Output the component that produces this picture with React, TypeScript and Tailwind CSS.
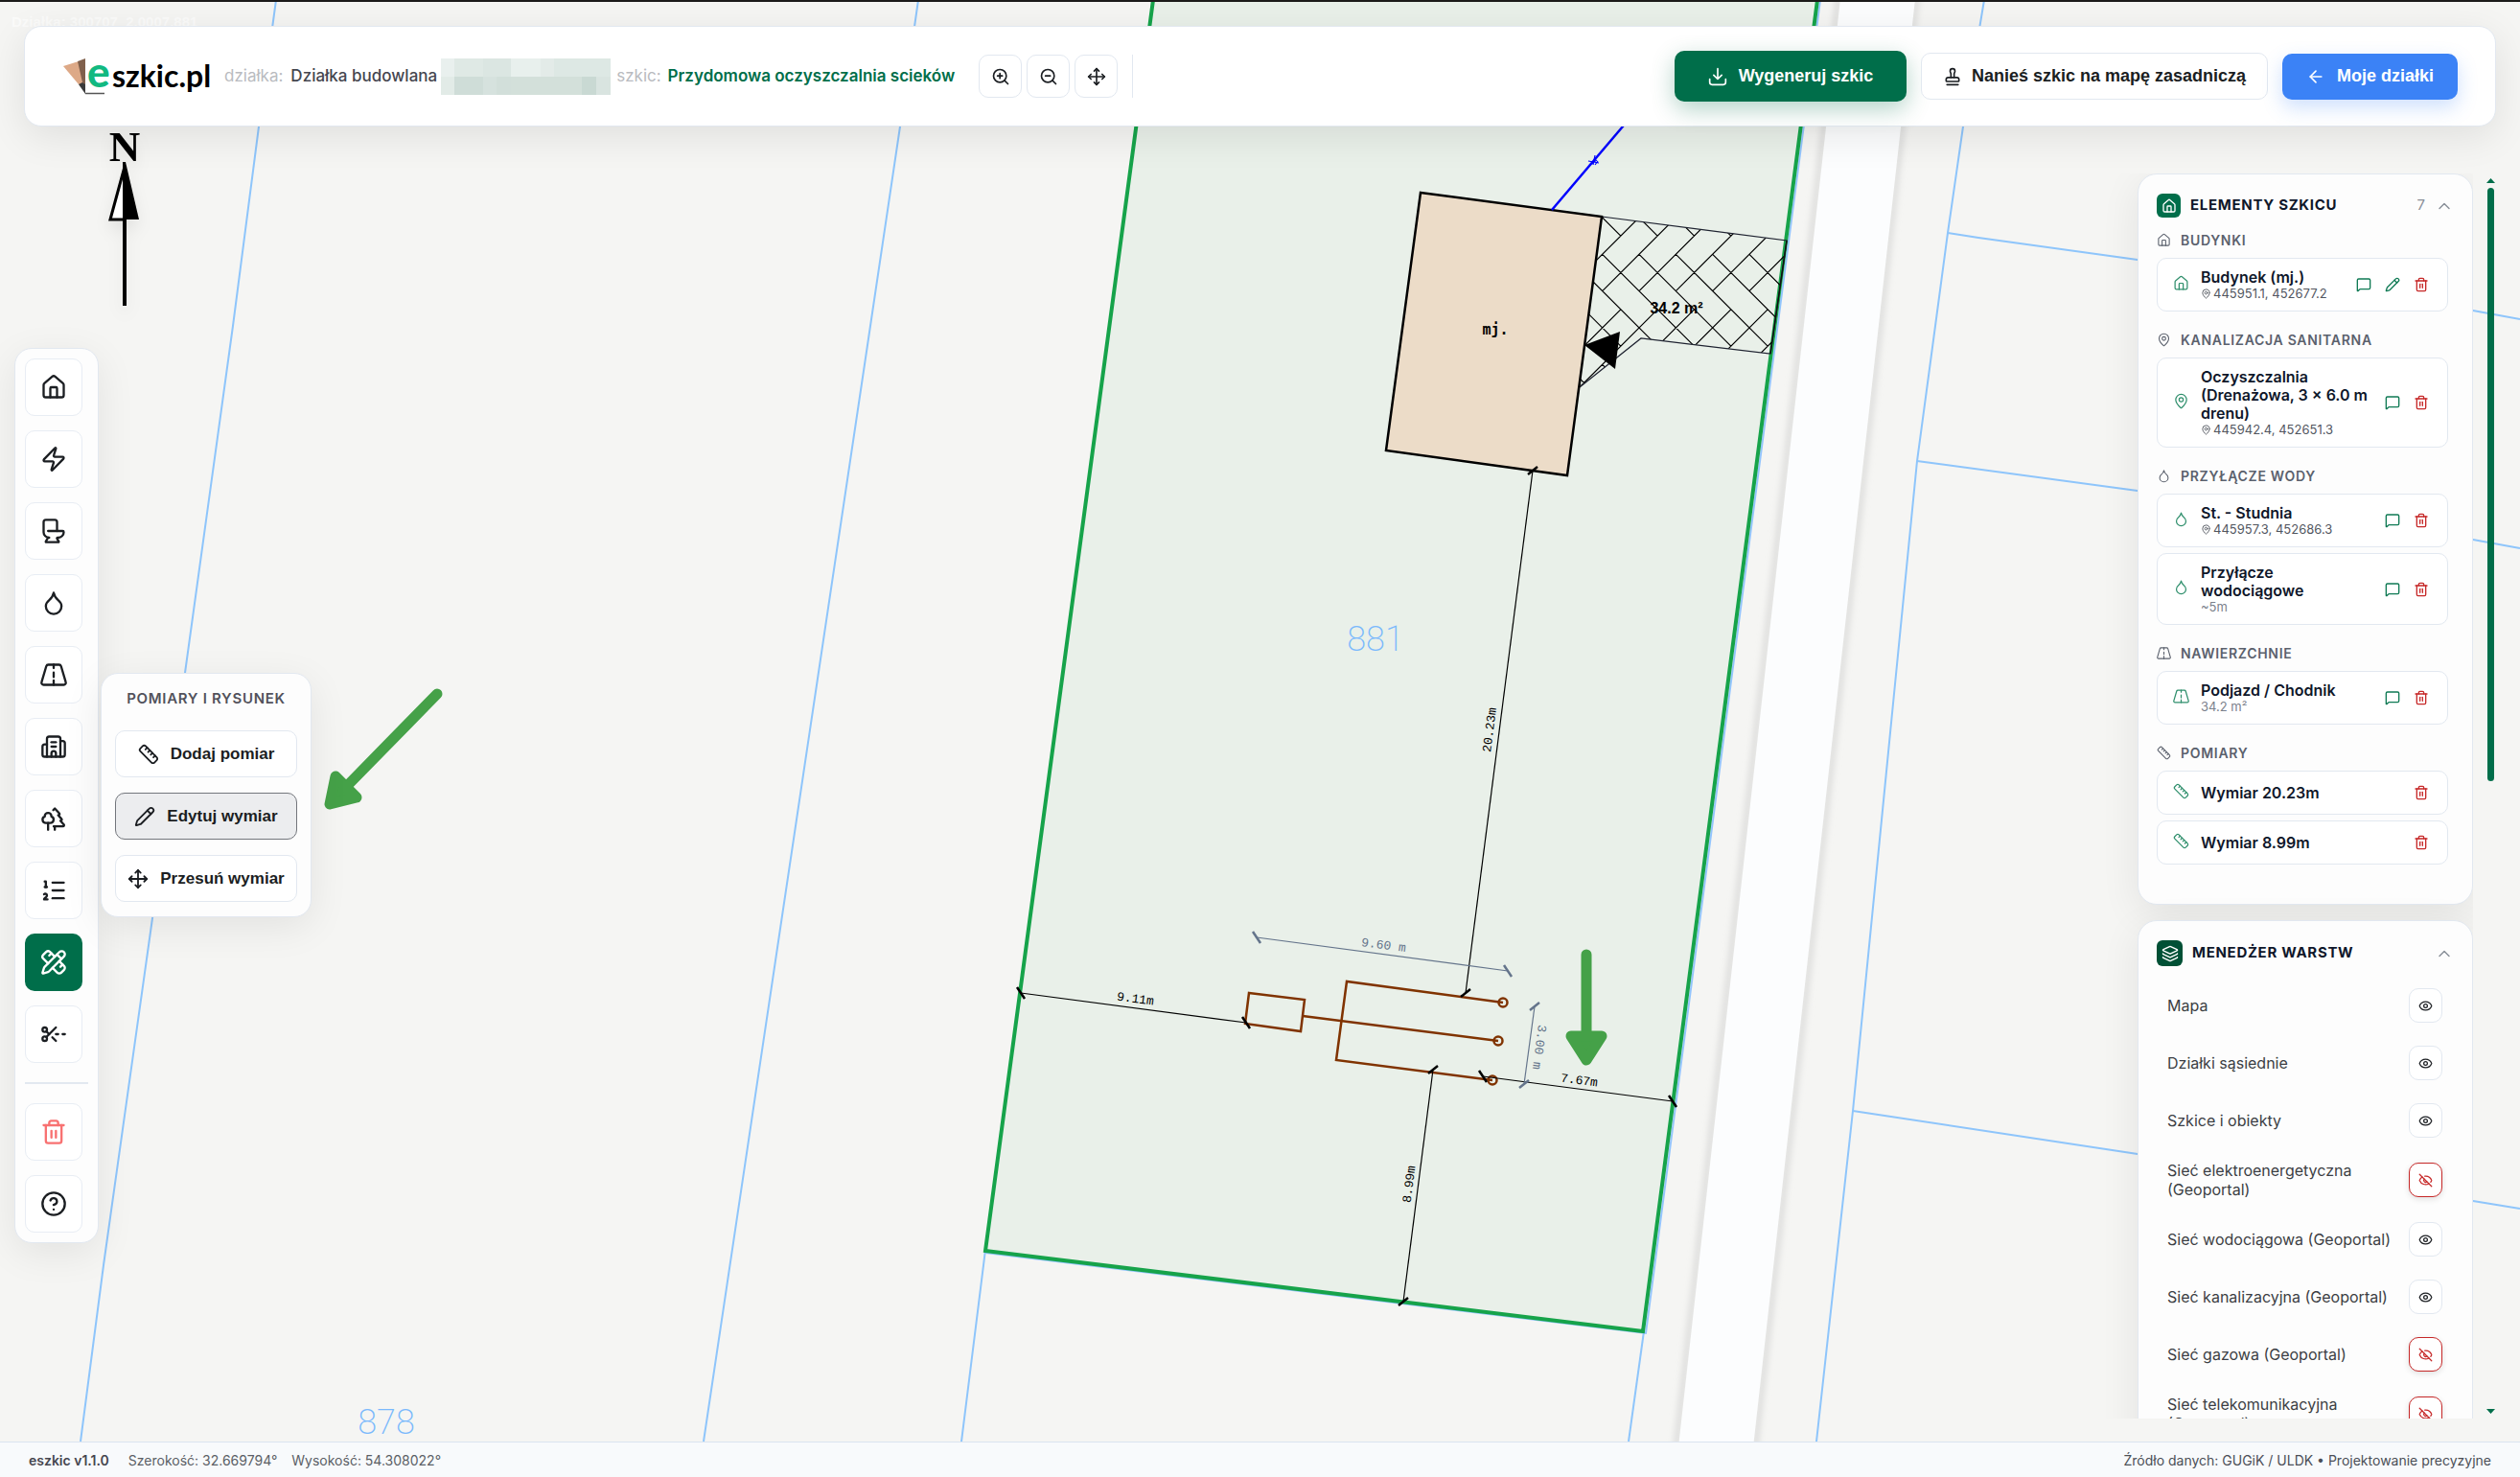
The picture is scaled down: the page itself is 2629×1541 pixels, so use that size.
import React from "react";
import {
  ArrowLeft,
  Building2,
  ChevronUp,
  CircleHelp,
  Droplet,
  Eye,
  EyeOff,
  House,
  Layers,
  ListOrdered,
  MapPin,
  MessageSquare,
  Move,
  Pencil,
  PencilRuler,
  Ruler,
  ScissorsLineDashed,
  Stamp,
  Toilet,
  Trash2,
  Trees,
  Zap,
  ZoomIn,
  ZoomOut,
} from "lucide-react";

type IconProps = { size?: number; strokeWidth?: number; className?: string };
type IconType = React.ComponentType<IconProps>;

function stroke(size: number, strokeWidth: number, className?: string) {
  return {
    width: size,
    height: size,
    viewBox: "0 0 24 24",
    fill: "none",
    stroke: "currentColor",
    strokeWidth,
    strokeLinecap: "round" as const,
    strokeLinejoin: "round" as const,
    className,
    "aria-hidden": true,
  };
}

function RoadIcon({ size = 24, strokeWidth = 2, className }: IconProps) {
  return (
    <svg {...stroke(size, strokeWidth, className)}>
      <path d="M12 17v4M12 10v4M12 3v3" />
      <path d="M7.2 3h9.6a1.9 1.9 0 0 1 1.8 1.3l4.2 14.2a1.9 1.9 0 0 1-1.9 2.5H3.1a1.9 1.9 0 0 1-1.9-2.5L5.4 4.3A1.9 1.9 0 0 1 7.2 3z" />
    </svg>
  );
}

function DownloadTray({ size = 24, strokeWidth = 2, className }: IconProps) {
  return (
    <svg {...stroke(size, strokeWidth, className)}>
      <path d="M12 2v13M7 10l5 5 5-5" />
      <path d="M2 15v4a3 3 0 0 0 3 3h14a3 3 0 0 0 3-3v-4" />
    </svg>
  );
}

/* ---------- map ---------- */

function Tick({ x, y, kind }: { x: number; y: number; kind: "h" | "v" }) {
  const dx = kind === "h" ? 4 : 5;
  const dy = kind === "h" ? 6 : -4;
  return <line x1={x - dx} y1={y - dy} x2={x + dx} y2={y + dy} strokeWidth="2.5" />;
}

type Dim = {
  a: [number, number];
  b: [number, number];
  t: [number, number];
  rot: number;
  kind: "h" | "v";
  color: string;
  label: string;
};

const dims: Dim[] = [
  { a: [1065, 1036], b: [1300, 1067], t: [1184, 1046], rot: 7.5, kind: "h", color: "#000", label: "9.11m" },
  { a: [1599, 491], b: [1529, 1036], t: [1558, 762], rot: -82.5, kind: "v", color: "#000", label: "20.23m" },
  { a: [1495, 1116], b: [1464, 1358], t: [1474, 1236], rot: -82.5, kind: "v", color: "#000", label: "8.99m" },
  { a: [1547, 1123], b: [1745, 1149], t: [1647, 1131], rot: 7.5, kind: "h", color: "#000", label: "7.67m" },
  { a: [1311, 978], b: [1573, 1013], t: [1443, 990], rot: 7.5, kind: "h", color: "#64748b", label: "9.60 m" },
  { a: [1601, 1050], b: [1590, 1131], t: [1602, 1092], rot: 97.5, kind: "v", color: "#64748b", label: "3.00 m" },
];

/* Herringbone paving: two families of 45° joints on a rectangular grid. */
const hatch: string[] = [];
for (let j = -2; j <= 2; j++) {
  for (let i = -5; i <= 6; i++) {
    const x = 1671.7 + i * 38.33;
    const y = 265.3 + j * 115;
    hatch.push(`M${x} ${y}l95.8 95.8`);
    hatch.push(`M${x} ${y + 38.3}l95.8 -95.8`);
  }
}

const parcels = [
  "M288 0L270 132L243 340L193 702L159 958L108 1320L84 1504",
  "M958 0L939 132L908 340L734 1504",
  "M1028 1304L1003 1504",
  "M1715 1389L1699 1504",
  "M2070 0L2048 132L2032 243L2019 340L2000 481L1933 1159L1895 1504",
  "M2032 243L2064 248L2230 271L2580 324L2629 333",
  "M2000 481L2230 512L2580 563L2629 572",
  "M1933 1159L2230 1204L2580 1253L2629 1261",
];

function MapCanvas() {
  return (
    <svg
      className="absolute inset-0 h-full w-full"
      viewBox="0 0 2629 1504"
      preserveAspectRatio="xMinYMin slice"
      role="img"
      aria-label="Mapa działki"
    >
      <defs>
        <clipPath id="driveway">
          <path d="M1671 226L1864 251L1847 369L1712 353L1648 404z" />
        </clipPath>
        <filter id="soft" x="-20%" y="-5%" width="140%" height="110%">
          <feGaussianBlur stdDeviation="3" />
        </filter>
      </defs>
      <rect width="2629" height="1504" fill="#f5f5f3" />
      <path d="M1919 -10L1749 1510M2000 -10L1831 1510" stroke="#dededd" strokeWidth="7" filter="url(#soft)" />
      <path d="M1921 -10L1999 -10L1829 1510L1751 1510z" fill="#fcfdfe" />
      <path d="M1203 0L1896 0L1714 1389L1028 1305z" fill="#e9f0e9" />
      <g fill="none" stroke="#8ec5fb" strokeWidth="2">
        {parcels.map((d) => (
          <path key={d} d={d} />
        ))}
      </g>
      <path d="M1899 0L1717 1391L1028 1307" fill="none" stroke="#93c5fd" strokeWidth="2" />
      <path d="M1203 0L1028 1305L1714 1389L1896 0" fill="none" stroke="#16a34a" strokeWidth="4" />

      <g fill="#7ab9fc" fontFamily="Roboto, sans-serif" fontWeight="200" fontSize="36" textAnchor="middle">
        <text x="1435" y="679">881</text>
        <text x="403" y="1496">878</text>
      </g>

      <path d={hatch.join("")} stroke="#000" strokeWidth="1.2" clipPath="url(#driveway)" />
      <path d="M1671 226L1864 251L1847 369L1712 353L1648 404" fill="none" stroke="#1e2230" strokeWidth="1.2" />
      <path d="M1864 251L1847 369" stroke="#111" strokeWidth="1.5" />
      <path d="M1482 201L1671 226L1635 496L1446 470z" fill="#ecdcc8" stroke="#000" strokeWidth="2.5" />
      <path d="M1653 360L1690 346L1685 385z" />
      <path d="M1619 219L1704 119" stroke="#0000ff" strokeWidth="2.5" />
      <path d="M1657 168l11 2M1662 172l2-10M1658 172l8-5M1664 172l3-4" stroke="#0000ff" strokeWidth="1.2" />
      <text x="1560" y="349" fontFamily="'DejaVu Sans Mono', monospace" fontWeight="700" fontSize="15" textAnchor="middle">
        mj.
      </text>
      <text x="1749" y="327" fontFamily="'Liberation Sans', sans-serif" fontWeight="700" fontSize="16" textAnchor="middle">
        34.2 m²
      </text>

      <g fill="none" stroke="#803300" strokeWidth="2.5">
        <path d="M1303 1036L1361 1043L1357 1076L1299 1068z" />
        <path d="M1359 1060L1563 1086" />
        <path d="M1568 1046L1405 1024L1394 1106L1557 1127" />
        <circle cx="1568" cy="1046" r="4.5" />
        <circle cx="1563" cy="1086" r="4.5" />
        <circle cx="1557" cy="1127" r="4.5" />
      </g>

      {dims.map((d) => (
        <g key={d.label} stroke={d.color} strokeWidth="1.2">
          <line x1={d.a[0]} y1={d.a[1]} x2={d.b[0]} y2={d.b[1]} />
          <Tick x={d.a[0]} y={d.a[1]} kind={d.kind} />
          <Tick x={d.b[0]} y={d.b[1]} kind={d.kind} />
          <text
            transform={`translate(${d.t[0]} ${d.t[1]}) rotate(${d.rot})`}
            fill={d.color}
            stroke="none"
            fontFamily="'Liberation Mono', monospace"
            fontSize="13"
            textAnchor="middle"
          >
            {d.label}
          </text>
        </g>
      ))}

      <g stroke="#45a148" fill="#45a148" strokeWidth="11" strokeLinecap="round" strokeLinejoin="round">
        <path d="M456 724L362 820" />
        <path d="M344 839L350 810L372 832z" />
        <path d="M1655 996L1655 1082" />
        <path d="M1639 1081L1671 1081L1655 1106z" />
      </g>
    </svg>
  );
}

/* ---------- header ---------- */

function Logo() {
  return (
    <svg width="156" height="42" viewBox="65 59 156 42" className="overflow-visible" role="img" aria-label="eszkic.pl">
      <path d="M66 69L82 64L88 90L82 88z" fill="#dda987" />
      <path d="M81 64L89 61L89 89L86 86z" fill="#80604c" />
      <path d="M82 88L86 86L89 88L89 98z" fill="#3a3a3a" />
      <path d="M89 97.5H109" stroke="#555" strokeWidth="1.5" />
      <text x="91" y="91" fontFamily="Lato, sans-serif" fontWeight="900" fontSize="44" fill="#12b981">
        e
      </text>
      <text x="117" y="91" fontFamily="Lato, sans-serif" fontWeight="700" fontSize="32" fill="#000">
        szkic.pl
      </text>
    </svg>
  );
}

const mosaic = [
  ["w-[14px] bg-[#e9f0ee]", "w-[30px] bg-[#dfe9e5]", "w-[29px] bg-[#dbe6e2]", "w-[31px] bg-[#e8f0ed]", "w-[14px] bg-[#e3ebe8]", "w-[59px] bg-[#dde8e4]"],
  ["w-[14px] bg-[#e2ebe7]", "w-[30px] bg-[#cfddd8]", "w-[14px] bg-[#d6e2de]", "w-[15px] bg-[#d2dfda]", "w-[74px] bg-[#d3e0da]", "w-[15px] bg-[#c9d9d3]", "w-[15px] bg-[#d9e4e0]"],
];

function ViewButton({ icon: Icon, label }: { icon: IconType; label: string }) {
  return (
    <button aria-label={label} className="flex h-[45px] w-[45px] items-center justify-center rounded-[10px] border border-[#e2e8f0] bg-white text-[#1b1e22]">
      <Icon size={20} strokeWidth={2} />
    </button>
  );
}

function Header() {
  return (
    <header className="relative mx-[25px] mt-[27px] flex shrink-0 items-center justify-between rounded-[18px] border border-[#e2e8f0] bg-white pt-[25px] pb-[25px] pr-[39px] pl-[39px] shadow-[0_10px_40px_rgba(0,0,0,0.09)]">
      <div className="flex items-center">
        <Logo />
        <div className="ml-[13px] flex items-center gap-2 text-[17px] whitespace-nowrap">
          <span className="text-[#b9bbc0]">działka:</span>
          <span className="font-medium text-[#45464f]">Działka budowlana</span>
        </div>
        <div className="ml-1 w-[177px]" aria-hidden>
          {mosaic.map((row, r) => (
            <div key={r} className="flex">
              {row.map((c) => (
                <span key={c} className={`${c} h-[19px]`} />
              ))}
            </div>
          ))}
        </div>
        <div className="ml-[6px] flex items-center gap-[7px] text-[17px] whitespace-nowrap">
          <span className="text-[#b9bbc0]">szkic:</span>
          <span className="font-semibold text-[#006e4a]">Przydomowa oczyszczalnia scieków</span>
        </div>
        <div className="ml-[25px] flex gap-[5px] border-r border-[#e2e8f0] pr-[15px]">
          <ViewButton icon={ZoomIn} label="Powiększ" />
          <ViewButton icon={ZoomOut} label="Pomniejsz" />
          <ViewButton icon={Move} label="Dopasuj widok" />
        </div>
      </div>
      <div className="flex items-center gap-[15px] font-['Liberation_Sans',sans-serif] text-[18px] font-bold whitespace-nowrap">
        <button className="flex h-[53px] w-[242px] items-center justify-center gap-3 rounded-[10px] bg-[#006e4a] text-white shadow-[0_8px_24px_rgba(0,110,74,0.3)]">
          <DownloadTray size={20} />
          Wygeneruj szkic
        </button>
        <button className="flex h-[49px] w-[362px] items-center justify-center gap-[10px] rounded-[10px] border border-[#e2e8f0] bg-white text-[#1b1e22]">
          <Stamp size={20} />
          Nanieś szkic na mapę zasadniczą
        </button>
        <button className="flex h-12 w-[183px] items-center justify-center gap-3 rounded-[10px] bg-[#3b82f6] text-white shadow-[0_8px_20px_rgba(59,130,246,0.25)]">
          <ArrowLeft size={20} />
          Moje działki
        </button>
      </div>
    </header>
  );
}

/* ---------- left side ---------- */

function NorthArrow() {
  return (
    <svg width="60" height="190" viewBox="100 134 60 190" className="overflow-visible drop-shadow-[0_8px_8px_rgba(0,0,0,0.08)]" role="img" aria-label="Północ">
      <text x="130" y="168" fontFamily="'Liberation Serif', serif" fontWeight="700" fontSize="45" textAnchor="middle">
        N
      </text>
      <path d="M130 174V229H115z" fill="#fff" stroke="#000" strokeWidth="3" />
      <path d="M128 169h3L145 229H129z" />
      <path d="M130 175V319" stroke="#000" strokeWidth="4" />
    </svg>
  );
}

const tools: { icon: IconType; label: string; active?: boolean }[] = [
  { icon: House, label: "Budynki" },
  { icon: Zap, label: "Energia" },
  { icon: Toilet, label: "Kanalizacja" },
  { icon: Droplet, label: "Woda" },
  { icon: RoadIcon, label: "Nawierzchnie" },
  { icon: Building2, label: "Zabudowa" },
  { icon: Trees, label: "Zieleń" },
  { icon: ListOrdered, label: "Numeracja" },
  { icon: PencilRuler, label: "Pomiary i rysunek", active: true },
  { icon: ScissorsLineDashed, label: "Przekrój" },
];

const toolBtn = "flex h-[60px] w-[60px] items-center justify-center rounded-[10px]";

function MeasureMenu() {
  const base =
    "flex h-[49px] w-full items-center justify-center gap-3 rounded-[10px] border font-['Liberation_Sans',sans-serif] text-[17px] font-bold text-[#1b1e22] whitespace-nowrap";
  return (
    <div className="absolute top-[338px] left-[89px] flex w-[220px] flex-col gap-4 rounded-[18px] border border-[#e2e8f0] bg-[#fdfdfd] p-[14px] pb-[15px] shadow-[0_10px_40px_rgba(0,0,0,0.08)]">
      <h2 className="mt-[3px] mb-2 text-center text-[15px] leading-[18px] font-semibold tracking-[0.7px] text-[#52525b]">POMIARY I RYSUNEK</h2>
      <button className={`${base} border-[#e2e8f0] bg-white`}>
        <Ruler size={22} />
        Dodaj pomiar
      </button>
      <button className={`${base} border-[#73767c] bg-[#ecedef]`}>
        <Pencil size={22} />
        Edytuj wymiar
      </button>
      <button className={`${base} border-[#e2e8f0] bg-white`}>
        <Move size={22} />
        Przesuń wymiar
      </button>
    </div>
  );
}

function Toolbar() {
  return (
    <nav className="relative ml-[15px] flex w-[88px] flex-col gap-[15px] rounded-[18px] border border-[#e2e8f0] bg-[#fdfdfd] p-[10px] shadow-[0_10px_40px_rgba(0,0,0,0.08)]">
      {tools.map(({ icon: Icon, label, active }) => (
        <button
          key={label}
          aria-label={label}
          className={active ? `${toolBtn} bg-[#006e4a] text-white` : `${toolBtn} border border-[#e8edf4] bg-white text-[#1b1e22]`}
        >
          <Icon size={28} />
        </button>
      ))}
      <hr className="my-[5px] border-t-2 border-[#e2e8f0]" />
      <button aria-label="Usuń" className={`${toolBtn} border border-[#e8edf4] bg-white text-[#f87171]`}>
        <Trash2 size={28} />
      </button>
      <button aria-label="Pomoc" className={`${toolBtn} border border-[#e8edf4] bg-white text-[#1b1e22]`}>
        <CircleHelp size={28} />
      </button>
      <MeasureMenu />
    </nav>
  );
}

/* ---------- right side ---------- */

type Item = { title: string; coords?: string; note?: string; actions: ("msg" | "edit" | "del")[] };
const groups: { name: string; icon: IconType; items: Item[] }[] = [
  { name: "BUDYNKI", icon: House, items: [{ title: "Budynek (mj.)", coords: "445951.1, 452677.2", actions: ["msg", "edit", "del"] }] },
  {
    name: "KANALIZACJA SANITARNA",
    icon: MapPin,
    items: [{ title: "Oczyszczalnia (Drenażowa, 3 × 6.0 m drenu)", coords: "445942.4, 452651.3", actions: ["msg", "del"] }],
  },
  {
    name: "PRZYŁĄCZE WODY",
    icon: Droplet,
    items: [
      { title: "St. - Studnia", coords: "445957.3, 452686.3", actions: ["msg", "del"] },
      { title: "Przyłącze wodociągowe", note: "~5m", actions: ["msg", "del"] },
    ],
  },
  { name: "NAWIERZCHNIE", icon: RoadIcon, items: [{ title: "Podjazd / Chodnik", note: "34.2 m²", actions: ["msg", "del"] }] },
  {
    name: "POMIARY",
    icon: Ruler,
    items: [
      { title: "Wymiar 20.23m", actions: ["del"] },
      { title: "Wymiar 8.99m", actions: ["del"] },
    ],
  },
];

const actionMap = {
  msg: { icon: MessageSquare as IconType, label: "Komentarz", cls: "text-[#0f7a54]" },
  edit: { icon: Pencil as IconType, label: "Edytuj", cls: "text-[#0f7a54]" },
  del: { icon: Trash2 as IconType, label: "Usuń", cls: "text-[#c62828]" },
};

function ItemCard({ item, icon: Icon }: { item: Item; icon: IconType }) {
  return (
    <li className="flex items-center rounded-[10px] border border-[#e2e8f0] bg-white py-[10px] pr-[14px] pl-4">
      <Icon size={17} strokeWidth={1.75} className="mb-1 shrink-0 text-[#2f8f6c]" />
      <div className="ml-3 min-w-0 flex-1">
        <p className="text-[16px] leading-[19px] font-semibold text-[#0f172a]">{item.title}</p>
        {item.coords && (
          <p className="flex items-center gap-[2px] text-[13px] leading-[15px] text-[#52565f]">
            <MapPin size={11} />
            {item.coords}
          </p>
        )}
        {item.note && <p className="text-[13px] leading-[15px] text-[#7b818c]">{item.note}</p>}
      </div>
      <div className="flex gap-1">
        {item.actions.map((a) => {
          const { icon: A, label, cls } = actionMap[a];
          return (
            <button key={a} aria-label={`${label}: ${item.title}`} className={`flex h-6 w-[26px] items-center justify-center ${cls}`}>
              <A size={16} />
            </button>
          );
        })}
      </div>
    </li>
  );
}

const panel = "shrink-0 rounded-[20px] border border-[#e2e8f0] bg-[#fdfdfd] pt-5 pl-[19px] pr-[25px] shadow-[0_10px_40px_rgba(0,0,0,0.08)]";

function ElementsPanel() {
  return (
    <section className={`${panel} pb-[41px]`}>
      <div className="-mr-[6px] mb-[14px] flex h-[25px] items-center">
        <span className="flex h-[25px] w-[25px] items-center justify-center rounded-[6px] bg-[#006e4a] text-white">
          <House size={16} />
        </span>
        <h2 className="ml-[10px] flex-1 text-[15px] font-bold tracking-[0.7px] text-[#0f172a]">ELEMENTY SZKICU</h2>
        <span className="text-[15px] text-[#8a9099]">7</span>
        <button aria-label="Zwiń elementy szkicu" className="ml-[10px] text-[#8a9099]">
          <ChevronUp size={20} strokeWidth={1.75} />
        </button>
      </div>
      <div className="flex flex-col gap-5">
        {groups.map(({ name, icon: Icon, items }) => (
          <div key={name}>
            <h3 className="mb-[10px] flex h-[18px] items-center gap-[10px] text-[14px] font-semibold tracking-[0.7px] text-[#5b616d]">
              <Icon size={15} strokeWidth={1.75} />
              {name}
            </h3>
            <ul className="flex flex-col gap-[6px]">
              {items.map((it) => (
                <ItemCard key={it.title} item={it} icon={Icon} />
              ))}
            </ul>
          </div>
        ))}
      </div>
    </section>
  );
}

const layers = [
  { name: "Mapa", on: true },
  { name: "Działki sąsiednie", on: true },
  { name: "Szkice i obiekty", on: true },
  { name: "Sieć elektroenergetyczna (Geoportal)", on: false },
  { name: "Sieć wodociągowa (Geoportal)", on: true },
  { name: "Sieć kanalizacyjna (Geoportal)", on: true },
  { name: "Sieć gazowa (Geoportal)", on: false },
  { name: "Sieć telekomunikacyjna (Geoportal)", on: false },
];

function LayersPanel() {
  return (
    <section className={`${panel} pb-10`}>
      <div className="-mr-[6px] mb-[11px] flex h-[27px] items-center">
        <span className="flex h-[27px] w-[27px] items-center justify-center rounded-[6px] bg-[#005035] text-white">
          <Layers size={18} />
        </span>
        <h2 className="ml-[10px] flex-1 text-[15px] font-bold tracking-[0.7px] text-[#0f172a]">MENEDŻER WARSTW</h2>
        <button aria-label="Zwiń menedżer warstw" className="text-[#8a9099]">
          <ChevronUp size={20} strokeWidth={1.75} />
        </button>
      </div>
      <ul>
        {layers.map(({ name, on }) => (
          <li key={name} className="flex items-center justify-between gap-4 py-3 pr-[6px] pl-[11px]">
            <span className="text-[16px] leading-5 text-[#3c3f44]">{name}</span>
            <button
              aria-label={`Widoczność: ${name}`}
              className={
                on
                  ? "flex h-9 w-[35px] shrink-0 items-center justify-center rounded-[10px] border border-[#e2e8f0] bg-white text-[#1b1e22]"
                  : "flex h-9 w-[35px] shrink-0 items-center justify-center rounded-[10px] border border-[#c62828] bg-white text-[#c62828] shadow-[0_2px_6px_rgba(0,0,0,0.12)]"
              }
            >
              {on ? <Eye size={15} /> : <EyeOff size={15} />}
            </button>
          </li>
        ))}
      </ul>
    </section>
  );
}

function ScrollTrack() {
  return (
    <div className="flex w-[10px] flex-col items-center py-[5px]" aria-hidden>
      <svg width="9" height="5" viewBox="0 0 9 5">
        <path d="M0 5L4.5 0L9 5z" fill="#006e4a" />
      </svg>
      <div className="mt-[5px] h-[48%] w-[7px] rounded-full bg-[#006e4a]" />
      <svg width="9" height="5" viewBox="0 0 9 5" className="mt-auto">
        <path d="M0 0H9L4.5 5z" fill="#006e4a" />
      </svg>
    </div>
  );
}

export default function App() {
  return (
    <div className="flex h-screen flex-col overflow-hidden bg-[#f5f5f3] font-[Inter,sans-serif]">
      <main className="relative flex min-h-0 flex-1 flex-col overflow-hidden">
        <MapCanvas />
        <div className="absolute inset-x-0 top-0 h-[2px] bg-[#1c1b1a]" />
        <p className="absolute top-[13px] left-[12px] font-['Liberation_Sans',sans-serif] text-[15px] leading-5 font-bold text-[#fbfbfa]">
          Działka: 300707_2.0007.881
        </p>
        <Header />
        <div className="flex min-h-0 flex-1 justify-between">
          <div className="relative flex flex-col items-start">
            <div className="mt-[2px] mb-[39px] ml-[100px]">
              <NorthArrow />
            </div>
            <Toolbar />
          </div>
          <div className="relative flex gap-[13px] pt-[49px] pr-[26px] pb-6">
            <div className="flex w-[390px] flex-col gap-4 overflow-hidden pl-10">
              <ElementsPanel />
              <LayersPanel />
            </div>
            <ScrollTrack />
          </div>
        </div>
      </main>
      <footer className="flex h-[37px] shrink-0 items-center justify-between border-t border-[#dbe4f0] bg-[#f8fafc] px-[30px] text-[14px] text-[#5b5f66]">
        <div className="flex items-center">
          <strong className="font-semibold text-[#45464f]">eszkic v1.1.0</strong>
          <span className="ml-5">Szerokość: 32.669794°</span>
          <span className="ml-[15px]">Wysokość: 54.308022°</span>
        </div>
        <span className="text-[#4b4f57]">Źródło danych: GUGiK / ULDK • Projektowanie precyzyjne</span>
      </footer>
    </div>
  );
}
